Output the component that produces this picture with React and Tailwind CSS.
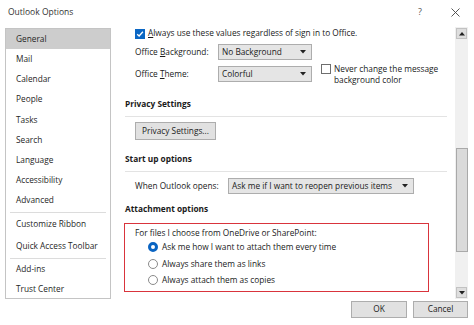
import React from "react";

const Arrow = ({ up = false }) => (
  <svg width="6" height="4" viewBox="0 0 6 4" className="block">
    {up ? <path d="M0 3.5h6L3 0z" fill="#222" /> : <path d="M0 0h6L3 3.5z" fill="#222" />}
  </svg>
);

const Select = ({ w, children }) => (
  <div
    className="flex items-center justify-between h-[16px] bg-[#e5e5e5] border border-[#adadad] pl-[3px] pr-[5px] shrink-0"
    style={{ width: w }}
  >
    <span className="whitespace-nowrap">{children}</span>
    <Arrow />
  </div>
);

const Radio = ({ on, children }) => (
  <div className="flex items-center h-[16.5px] pl-[23px]">
    {on ? (
      <div className="w-[10px] h-[10px] rounded-full border-[3px] border-[#0a64c2] bg-white shrink-0" />
    ) : (
      <div className="w-[10px] h-[10px] rounded-full border border-[#8a8a8a] bg-white shrink-0" />
    )}
    <span className="ml-[4px] whitespace-nowrap">{children}</span>
  </div>
);

const Header = ({ children }) => (
  <div className="font-bold leading-[12px] h-[12px] text-[#1a1a1a] whitespace-nowrap">{children}</div>
);

const Line = () => <div className="h-px bg-[#e3e3e3] mt-[6px]" />;

export default function App() {
  const items = [
    ["General", "h-[20.2px]", true],
    ["Mail", "h-[20.2px]"],
    ["Calendar", "h-[20.2px]"],
    ["People", "h-[20.2px]"],
    ["Tasks", "h-[20.2px]"],
    ["Search", "h-[20.2px]"],
    ["Language", "h-[20.2px]"],
    ["Accessibility", "h-[20.2px]"],
    ["Advanced", "h-[20.2px]"],
    "sep",
    ["Customize Ribbon", "h-[21.5px]"],
    ["Quick Access Toolbar", "h-[21.5px]"],
    "sep",
    ["Add-ins", "h-[20px]"],
    ["Trust Center", "h-[20px]"],
  ];

  return (
    <div
      className="w-[474px] h-[325px] bg-white overflow-hidden text-[8.3px] text-[#1a1a1a] relative"
      style={{ fontFamily: '"Open Sans", "Noto Sans", sans-serif' }}
    >
      {/* Title bar */}
      <div className="h-[27px] flex items-center pl-[8px] pb-[3px]">
        <span className="text-[8.5px] text-[#333]">Outlook Options</span>
        <span className="ml-auto text-[9px] text-[#555]">?</span>
        <svg width="9" height="9" viewBox="0 0 9 9" className="ml-[29px] mr-[14px]">
          <path d="M0.5 0.5L8.5 8.5M8.5 0.5L0.5 8.5" stroke="#444" strokeWidth="0.9" />
        </svg>
      </div>

      {/* Body */}
      <div className="flex h-[272px]">
        {/* Sidebar */}
        <div className="ml-[5px] mt-[1px] w-[106px] h-[271px] border border-[#c4c4c4] overflow-hidden flex flex-col shrink-0">
          {items.map((it, i) =>
            it === "sep" ? (
              <div key={i} className="h-[3px] flex items-center px-[4px] shrink-0">
                <div className="h-px w-full bg-[#dcdcdc]" />
              </div>
            ) : (
              <div
                key={i}
                className={`${it[1]} shrink-0 flex items-center pl-[10px] whitespace-nowrap text-[#262626] ${
                  it[2] ? "bg-[#cdcdcd]" : ""
                }`}
              >
                {it[0]}
              </div>
            )
          )}
        </div>

        {/* Content */}
        <div className="flex-1 pl-[14px] pr-[8px] overflow-hidden">
          {/* row 1 */}
          <div className="flex items-center h-[11px] mt-[1px] pl-[10px]">
            <div className="w-[10px] h-[10px] bg-[#0b67c4] flex items-center justify-center shrink-0">
              <svg width="8" height="8" viewBox="0 0 8 8">
                <path d="M1.2 4.2L3.1 6L6.9 1.8" stroke="white" strokeWidth="1.3" fill="none" />
              </svg>
            </div>
            <span className="ml-[3px] whitespace-nowrap">
              <u className="underline-offset-1">A</u>lways use these values regardless of sign in to Office.
            </span>
          </div>

          {/* row 2 */}
          <div className="flex items-center h-[16px] mt-[5px] pl-[10px]">
            <span className="w-[83px] shrink-0 whitespace-nowrap">
              Office <u className="underline-offset-1">B</u>ackground:
            </span>
            <Select w={94}>No Background</Select>
          </div>

          {/* row 3 */}
          <div className="flex items-start h-[16px] mt-[6px] pl-[10px]">
            <span className="w-[83px] shrink-0 whitespace-nowrap self-center">
              Office <u className="underline-offset-1">T</u>heme:
            </span>
            <Select w={94}>Colorful</Select>
            <div className="flex items-start ml-[9px] -mt-[3px]">
              <div className="w-[10px] h-[10px] border border-[#6e6e6e] bg-white mt-[1px] shrink-0" />
              <div className="ml-[3px] leading-[11px] whitespace-nowrap">
                <div>Never change the message</div>
                <div>background color</div>
              </div>
            </div>
          </div>

          {/* Privacy */}
          <div className="mt-[16px]">
            <Header>Privacy Settings</Header>
          </div>
          <Line />
          <div className="mt-[5px] pl-[10px]">
            <div className="w-[81px] h-[18px] bg-[#e1e1e1] border border-[#adadad] flex items-center justify-center whitespace-nowrap">
              Privacy Settings...
            </div>
          </div>

          {/* Start up */}
          <div className="mt-[13px]">
            <Header>Start up options</Header>
          </div>
          <Line />
          <div className="flex items-center h-[16px] mt-[6px] pl-[10px]">
            <span className="w-[93px] shrink-0 whitespace-nowrap">When Outlook opens:</span>
            <Select w={186}>Ask me if I want to reopen previous items</Select>
          </div>

          {/* Attachment */}
          <div className="mt-[9px]">
            <Header>Attachment options</Header>
          </div>
          <div className="mt-[8px] -ml-px w-[305px] h-[69px] border border-[#d9343c] pt-[3px]">
            <div className="h-[12px] leading-[12px] pl-[10px] whitespace-nowrap">
              For files I choose from OneDrive or SharePoint:
            </div>
            <Radio on>Ask me how I want to attach them every time</Radio>
            <Radio>Always share them as links</Radio>
            <Radio>Always attach them as copies</Radio>
          </div>
        </div>

        {/* Scrollbar */}
        <div className="w-[13px] mr-[6px] bg-[#f0f0f0] flex flex-col items-center shrink-0">
          <div className="mt-[1px] w-[11px] h-[11px] bg-[#dedede] border border-[#c2c2c2] flex items-center justify-center">
            <Arrow up />
          </div>
          <div className="mt-[109px] w-[12px] h-[104px] bg-[#dadada] border border-[#a9a9a9]" />
          <div className="mt-[35px] w-[11px] h-[11px] bg-[#dedede] border border-[#c2c2c2] flex items-center justify-center">
            <Arrow />
          </div>
        </div>
      </div>

      {/* Footer */}
      <div className="flex justify-end gap-[6px] pr-[6px] pt-[2px]">
        <div className="w-[56px] h-[17px] bg-[#e1e1e1] border border-[#adadad] flex items-center justify-center">
          OK
        </div>
        <div className="w-[55px] h-[17px] bg-[#e1e1e1] border border-[#adadad] flex items-center justify-center">
          Cancel
        </div>
      </div>
    </div>
  );
}
